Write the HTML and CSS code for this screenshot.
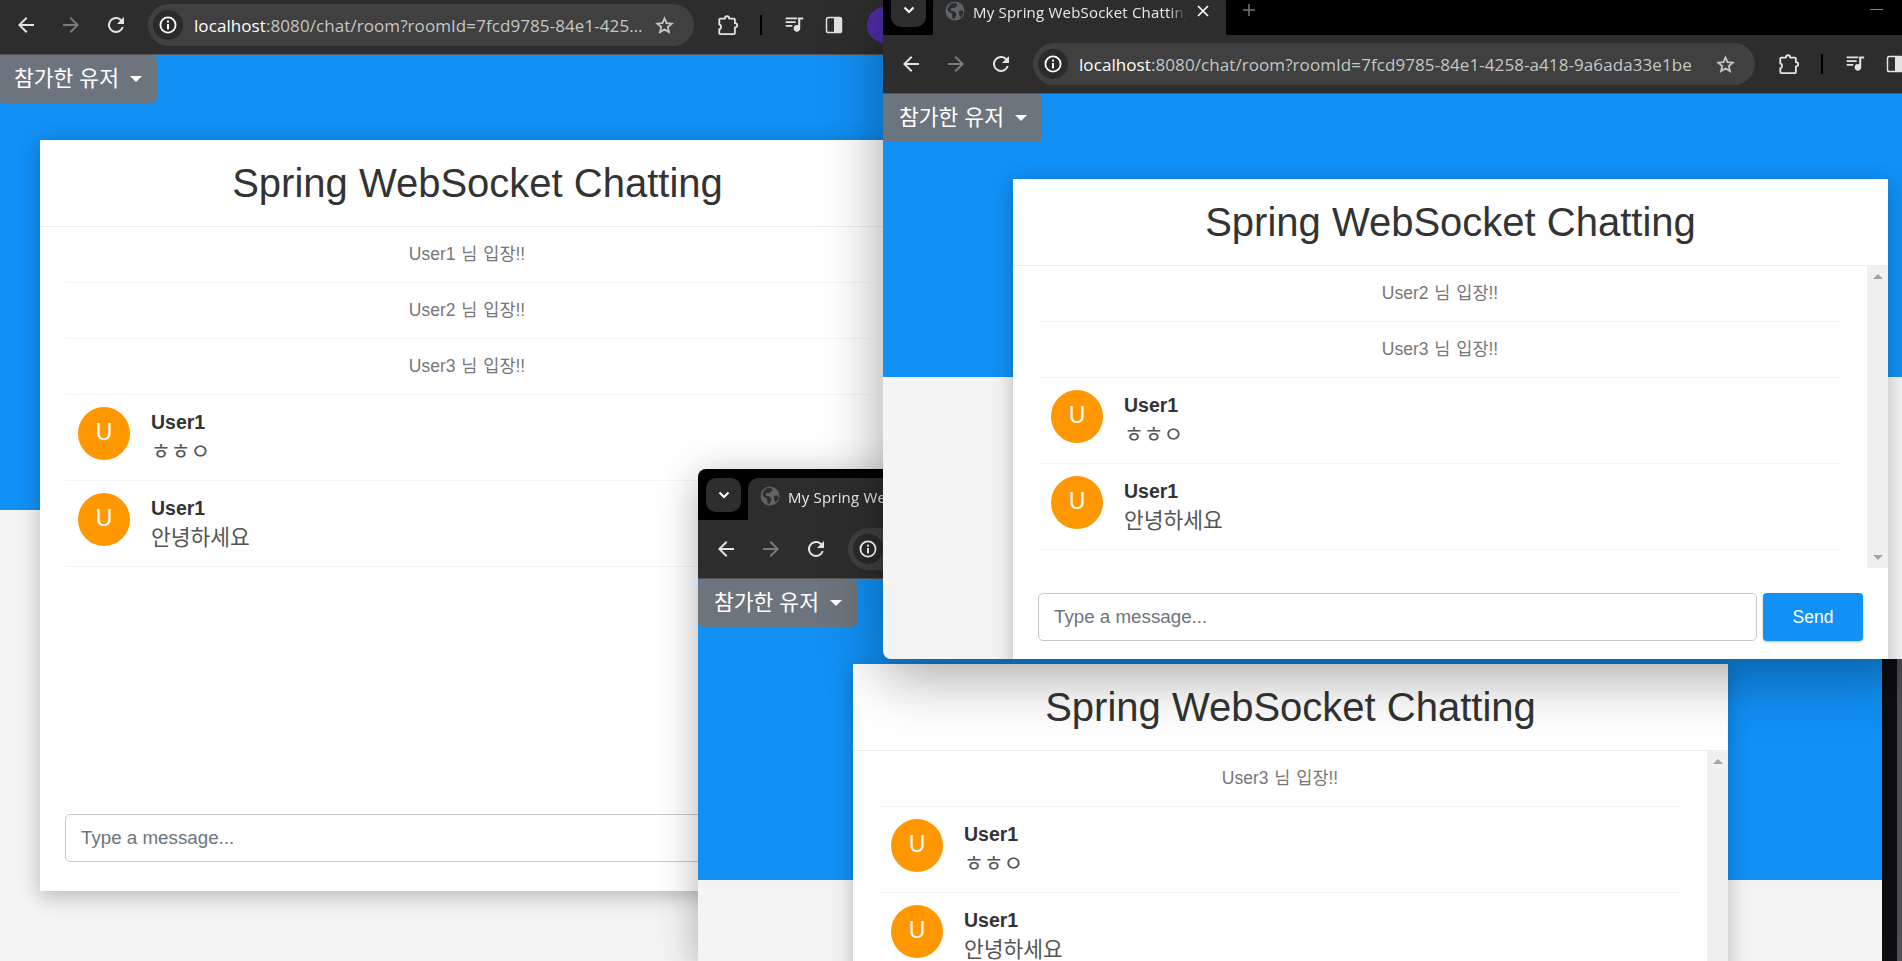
FILE: index.html
```html
<!DOCTYPE html>
<html lang="ko">
<head>
  <meta charset="UTF-8" />
  <meta name="viewport" content="width=device-width, initial-scale=1" />
  <title>Spring WebSocket Chatting</title>
  <link rel="stylesheet" href="styles.css">
</head>
<body>
  <svg class="sprite" aria-hidden="true">
    <symbol id="i-back" viewBox="0 0 24 24"><path fill="currentColor" d="M20 11H7.8l5.6-5.6L12 4l-8 8 8 8 1.4-1.4L7.8 13H20z"/></symbol>
    <symbol id="i-forward" viewBox="0 0 24 24"><path fill="currentColor" d="M4 11h12.2l-5.6-5.6L12 4l8 8-8 8-1.4-1.4 5.6-5.6H4z"/></symbol>
    <symbol id="i-reload" viewBox="0 0 24 24"><path fill="currentColor" d="M17.65 6.35A8 8 0 1 0 19.73 14h-2.08A6 6 0 1 1 12 6c1.66 0 3.14.69 4.22 1.78L13 11h7V4z"/></symbol>
    <symbol id="i-info" viewBox="0 0 18 18"><circle cx="9" cy="9" r="7.6" fill="none" stroke="currentColor" stroke-width="1.8"/><rect x="8" y="8" width="2" height="5.4" fill="currentColor"/><rect x="8" y="4.6" width="2" height="2" fill="currentColor"/></symbol>
    <symbol id="i-star" viewBox="0 0 20 20"><path fill="none" stroke="currentColor" stroke-width="1.9" d="M10 2.6l2.2 5 5.4.5-4.1 3.6 1.2 5.3L10 14.200l-4.700 2.800 1.200-5.300L2.400 8.100l5.400-.5z"/></symbol>
    <symbol id="i-puzzle" viewBox="0 0 24 24"><path fill="none" stroke="currentColor" stroke-width="2" stroke-linejoin="round" d="M3.500 5h5.200c0-3.400 4.600-3.400 4.600 0h5.200a1 1 0 0 1 1 1v4c3.400 0 3.400 4.600 0 4.600V21a1 1 0 0 1-1 1H3.500a1 1 0 0 1-1-1v-4.500c2.500 0 2.500-5 0-5V6a1 1 0 0 1 1-1z"/></symbol>
    <symbol id="i-media" viewBox="0 0 24 24"><path fill="currentColor" d="M2 3h14v2H2zM2 7.500h12v2H2zM2 12h8v2H2zM17 3h6v2.500h-3.500V16a4 4 0 1 1-2.500-3.700z"/></symbol>
    <symbol id="i-side" viewBox="0 0 24 24"><rect x="2" y="2" width="20" height="20" rx="2.500" fill="none" stroke="currentColor" stroke-width="2"/><rect x="12" y="2" width="10" height="20" rx="1.500" fill="currentColor"/></symbol>
    <symbol id="i-globe" viewBox="0 0 20 20"><circle cx="10" cy="10" r="9.500" fill="#5f6368"/><path fill="#2d2d2d" d="M6 2.500l5-.8 1.500 2.500-2.500 2.600-3.500.2-1 2.500 4 1 2 2.500-2 5-2-.7-.5-4.500-4-2.800L2.500 7zM14 10l3.800-.5.800 3-3 4-1.500-3z"/></symbol>
    <symbol id="i-chevron" viewBox="0 0 14 14"><path fill="none" stroke="currentColor" stroke-width="2" d="M2.500 4.500L7 9l4.500-4.500"/></symbol>
    <symbol id="i-close" viewBox="0 0 14 14"><path fill="none" stroke="currentColor" stroke-width="1.700" d="M2 2l10 10M12 2L2 12"/></symbol>
    <symbol id="i-plus" viewBox="0 0 14 14"><path fill="none" stroke="currentColor" stroke-width="1.500" d="M7 1v12M1 7h12"/></symbol>
  </svg>

  <!-- back window: User1 -->
  <div class="window win-back">
    <div class="toolbar">
      <span class="nav-btn"><svg class="icon-24"><use href="#i-back"/></svg></span>
      <span class="nav-btn dim"><svg class="icon-24"><use href="#i-forward"/></svg></span>
      <span class="nav-btn"><svg class="icon-24"><use href="#i-reload"/></svg></span>
      <div class="omnibox">
        <span class="site-info"><svg class="icon-18"><use href="#i-info"/></svg></span>
        <span class="url"><b>localhost</b>:8080/chat/room?roomId=7fcd9785-84e1-4258-a418-9a6ada33e1be</span>
        <svg class="star"><use href="#i-star"/></svg>
      </div>
      <span class="tool-btn"><svg class="icon-22"><use href="#i-puzzle"/></svg></span>
      <span class="tool-sep"></span>
      <span class="tool-btn media"><svg class="icon-20"><use href="#i-media"/></svg></span>
      <span class="tool-btn"><svg class="icon-18"><use href="#i-side"/></svg></span>
      <span class="profile"></span>
    </div>
    <div class="page">
      <button class="user-dropdown" type="button">참가한 유저 <span class="caret"></span></button>
      <div class="chat-card">
        <div class="chat-header"><h1>Spring WebSocket Chatting</h1></div>
        <div class="chat-body">
          <ul class="msg-list">
            <li class="msg-row sys">User1 님 입장!!</li>
            <li class="msg-row sys">User2 님 입장!!</li>
            <li class="msg-row sys">User3 님 입장!!</li>
            <li class="msg-row user">
              <span class="avatar">U</span>
              <div class="msg-text"><strong>User1</strong><p>ㅎㅎㅇ</p></div>
            </li>
            <li class="msg-row user">
              <span class="avatar">U</span>
              <div class="msg-text"><strong>User1</strong><p>안녕하세요</p></div>
            </li>
          </ul>
        </div>
        <form class="chat-form">
          <input type="text" placeholder="Type a message..." />
          <button type="button">Send</button>
        </form>
      </div>
    </div>
  </div>

  <!-- lower window: User3 -->
  <div class="window win-low">
    <div class="tabbar">
      <span class="tab-search"><svg class="icon-14"><use href="#i-chevron"/></svg></span>
      <div class="tab">
        <svg class="icon-20 globe"><use href="#i-globe"/></svg>
        <span class="tab-title">My Spring WebSocket Chatting</span>
        <svg class="icon-14 tab-close"><use href="#i-close"/></svg>
      </div>
      <svg class="icon-14 new-tab"><use href="#i-plus"/></svg>
    </div>
    <div class="toolbar">
      <span class="nav-btn"><svg class="icon-24"><use href="#i-back"/></svg></span>
      <span class="nav-btn dim"><svg class="icon-24"><use href="#i-forward"/></svg></span>
      <span class="nav-btn"><svg class="icon-24"><use href="#i-reload"/></svg></span>
      <div class="omnibox">
        <span class="site-info"><svg class="icon-18"><use href="#i-info"/></svg></span>
        <span class="url"><b>localhost</b>:8080/chat/room?roomId=7fcd9785-84e1-4258-a418-9a6ada33e1be</span>
        <svg class="star"><use href="#i-star"/></svg>
      </div>
    </div>
    <div class="page">
      <button class="user-dropdown" type="button">참가한 유저 <span class="caret"></span></button>
      <div class="chat-card">
        <div class="chat-header"><h1>Spring WebSocket Chatting</h1></div>
        <div class="chat-body">
          <ul class="msg-list">
            <li class="msg-row sys">User3 님 입장!!</li>
            <li class="msg-row user">
              <span class="avatar">U</span>
              <div class="msg-text"><strong>User1</strong><p>ㅎㅎㅇ</p></div>
            </li>
            <li class="msg-row user">
              <span class="avatar">U</span>
              <div class="msg-text"><strong>User1</strong><p>안녕하세요</p></div>
            </li>
          </ul>
          <div class="scrollbar"><span class="arrow-up"></span><span class="arrow-down"></span></div>
        </div>
      </div>
    </div>
  </div>

  <!-- front window: User2 -->
  <div class="window win-front">
    <div class="tabbar">
      <span class="tab-search"><svg class="icon-14"><use href="#i-chevron"/></svg></span>
      <div class="tab">
        <svg class="icon-20 globe"><use href="#i-globe"/></svg>
        <span class="tab-title">My Spring WebSocket Chatting</span>
        <svg class="icon-14 tab-close"><use href="#i-close"/></svg>
      </div>
      <svg class="icon-14 new-tab"><use href="#i-plus"/></svg>
      <span class="win-min"></span>
    </div>
    <div class="toolbar">
      <span class="nav-btn"><svg class="icon-24"><use href="#i-back"/></svg></span>
      <span class="nav-btn dim"><svg class="icon-24"><use href="#i-forward"/></svg></span>
      <span class="nav-btn"><svg class="icon-24"><use href="#i-reload"/></svg></span>
      <div class="omnibox">
        <span class="site-info"><svg class="icon-18"><use href="#i-info"/></svg></span>
        <span class="url"><b>localhost</b>:8080/chat/room?roomId=7fcd9785-84e1-4258-a418-9a6ada33e1be</span>
        <svg class="star"><use href="#i-star"/></svg>
      </div>
      <span class="tool-btn"><svg class="icon-22"><use href="#i-puzzle"/></svg></span>
      <span class="tool-sep"></span>
      <span class="tool-btn media"><svg class="icon-20"><use href="#i-media"/></svg></span>
      <span class="tool-btn"><svg class="icon-18"><use href="#i-side"/></svg></span>
    </div>
    <div class="page">
      <button class="user-dropdown" type="button">참가한 유저 <span class="caret"></span></button>
      <div class="chat-card">
        <div class="chat-header"><h1>Spring WebSocket Chatting</h1></div>
        <div class="chat-body">
          <ul class="msg-list">
            <li class="msg-row sys">User2 님 입장!!</li>
            <li class="msg-row sys">User3 님 입장!!</li>
            <li class="msg-row user">
              <span class="avatar">U</span>
              <div class="msg-text"><strong>User1</strong><p>ㅎㅎㅇ</p></div>
            </li>
            <li class="msg-row user">
              <span class="avatar">U</span>
              <div class="msg-text"><strong>User1</strong><p>안녕하세요</p></div>
            </li>
          </ul>
          <div class="scrollbar"><span class="arrow-up"></span><span class="arrow-down"></span></div>
        </div>
        <form class="chat-form">
          <input type="text" placeholder="Type a message..." />
          <button type="button">Send</button>
        </form>
      </div>
    </div>
  </div>
</body>
</html>
```

FILE: styles.css
```css
html, body {
  height: 100%;
}
body {
  margin: 0;
  overflow: hidden;
  position: relative;
  font-family: "Liberation Sans", "Noto Sans CJK KR", sans-serif;
  background: linear-gradient(90deg, #0d0f13 1897px, #555 1897px);
}
.sprite {
  display: none;
}

/* windows on the desktop */
.window {
  position: absolute;
  overflow: hidden;
  display: flex;
  flex-direction: column;
}
.win-back {
  left: -2px;
  top: -4px;
  width: 885px;
  height: 965px;
}
.win-low {
  left: 698px;
  top: 469px;
  width: 1184px;
  height: 492px;
  border-radius: 8px 0 0 0;
  box-shadow: 0 8px 40px rgba(0,0,0,0.3);
}
.win-front {
  left: 883px;
  top: -16px;
  width: 1030px;
  height: 675px;
  border-radius: 8px;
  box-shadow: 0 16px 60px rgba(0,0,0,0.36);
}

/* browser chrome */
.tabbar {
  flex: none;
  display: flex;
  align-items: flex-start;
  height: 51px;
  padding-top: 9px;
  box-sizing: border-box;
  background: #000;
  color: #fff;
}
.tab-search {
  display: flex;
  align-items: center;
  justify-content: center;
  width: 35px;
  height: 34px;
  margin-left: 8px;
  border-radius: 10px;
  background: #2d2d2d;
}
.tab {
  display: flex;
  align-items: flex-start;
  width: 293px;
  height: 42px;
  margin-left: 7px;
  padding: 8px 16px 0 12px;
  box-sizing: border-box;
  border-radius: 10px 10px 0 0;
  background: #2d2d2d;
}
.globe {
  flex: none;
}
.tab-title {
  flex: 1;
  min-width: 0;
  margin: 1px 10px 0 8px;
  overflow: hidden;
  white-space: nowrap;
  font: 15px "Open Sans", sans-serif;
  letter-spacing: 0.2px;
  color: #e8eaed;
  -webkit-mask-image: linear-gradient(90deg, #000 92%, transparent);
  mask-image: linear-gradient(90deg, #000 92%, transparent);
}
.tab-close {
  flex: none;
  margin-top: 3px;
}
.new-tab {
  margin: 10px 0 0 16px;
  color: #777;
}
.win-min {
  width: 13px;
  height: 1px;
  margin: 16px 0 0 614px;
  background: #888;
}
.toolbar {
  flex: none;
  display: flex;
  align-items: center;
  height: 59px;
  padding-left: 5px;
  box-sizing: border-box;
  border-bottom: 1px solid #555;
  background: #2d2d2d;
  color: #e3e3e3;
}
.nav-btn {
  flex: none;
  display: flex;
  align-items: center;
  justify-content: center;
  width: 45px;
}
.nav-btn.dim {
  color: #7a7a7a;
}
.omnibox {
  display: flex;
  align-items: center;
  flex: none;
  height: 42px;
  margin-left: 10px;
  padding-left: 5px;
  box-sizing: border-box;
  border-radius: 21px;
  background: #404040;
}
.win-back .omnibox {
  width: 546px;
}
.win-low .omnibox,
.win-front .omnibox {
  width: 722px;
}
.site-info {
  flex: none;
  display: flex;
  align-items: center;
  justify-content: center;
  width: 30px;
  height: 30px;
  border-radius: 50%;
  background: #2b2b2b;
  color: #fff;
}
.url {
  flex: 1;
  min-width: 0;
  margin-left: 11px;
  overflow: hidden;
  white-space: nowrap;
  text-overflow: ellipsis;
  font: 17px "Open Sans", sans-serif;
  letter-spacing: 0.08px;
  color: #c4c7c5;
}
.url b {
  font-weight: 400;
  color: #fff;
}
.star {
  flex: none;
  width: 19px;
  height: 19px;
  margin: 0 20px 0 6px;
  color: #c4c7c5;
}
.tool-btn {
  flex: none;
  display: flex;
  align-items: center;
  justify-content: center;
  width: 40px;
  color: #e3e3e3;
}
.omnibox + .tool-btn {
  margin-left: 14px;
}
.tool-sep {
  flex: none;
  width: 2px;
  height: 20px;
  margin-left: 12px;
  background: #000;
}
.tool-btn.media {
  margin-left: 12px;
}
.profile {
  flex: none;
  width: 36px;
  height: 36px;
  margin-left: 13px;
  border-radius: 50%;
  background: #512da8;
}
.icon-24 { width: 24px; height: 24px; }
.icon-22 { width: 22px; height: 22px; }
.icon-20 { width: 20px; height: 20px; }
.icon-18 { width: 18px; height: 18px; }
.icon-14 { width: 14px; height: 14px; }

/* chat page */
.page {
  flex: 1;
  min-height: 0;
  background: #f4f4f4;
}
.win-back .page {
  background: linear-gradient(#1190f5 455px, #f4f4f4 455px);
}
.win-low .page {
  background: linear-gradient(#1190f5 301px, #f4f4f4 301px);
}
.win-front .page {
  background: linear-gradient(#1190f5 283px, #f4f4f4 283px);
}
.user-dropdown {
  display: block;
  width: 159px;
  height: 48px;
  padding: 0 0 5px 16px;
  border: none;
  border-radius: 5px;
  background: #6c757d;
  color: #fff;
  text-align: left;
  font: 21.500px "Noto Sans CJK KR", sans-serif;
}
.caret {
  display: inline-block;
  margin-left: 5px;
  vertical-align: 4px;
  border-top: 6px solid #fff;
  border-left: 6px solid transparent;
  border-right: 6px solid transparent;
}
.chat-card {
  width: 875px;
  margin-top: 37px;
  background: #fff;
  box-shadow: 0 5px 20px rgba(0,0,0,0.25);
}
.win-back .chat-card { margin-left: 42px; }
.win-low .chat-card { margin-left: 155px; }
.win-front .chat-card { margin-left: 130px; }
.chat-header {
  height: 87px;
  box-sizing: border-box;
  border-bottom: 1px solid #eee;
  display: flex;
  align-items: center;
  justify-content: center;
}
.chat-header h1 {
  margin: 0;
  font-size: 40px;
  font-weight: 400;
  color: #333;
}
.chat-body {
  display: flex;
  height: 302px;
}
.win-back .chat-body {
  height: 562px;
}
.msg-list {
  flex: 1;
  min-width: 0;
  margin: 0;
  padding: 0 25px;
  list-style: none;
  overflow: hidden;
}
.win-back .msg-list {
  margin-right: 21px;
}
.msg-row {
  box-sizing: border-box;
  border-bottom: 1px solid #f4f4f4;
}
.msg-row.sys {
  height: 56px;
  line-height: 54px;
  text-align: center;
  font-size: 17.5px;
  word-spacing: 1px;
  color: #777;
}
.msg-row.user {
  display: flex;
  height: 86px;
  padding: 12px 0 0 13px;
}
.avatar {
  flex: none;
  width: 52px;
  height: 53px;
  border-radius: 50%;
  background: #ff9800;
  color: #fff;
  text-align: center;
  font-size: 23px;
  line-height: 50px;
}
.msg-text {
  margin-left: 21px;
}
.msg-text strong {
  display: block;
  height: 29px;
  line-height: 31px;
  font-size: 19.500px;
  color: #333;
}
.msg-text p {
  margin: 0;
  height: 30px;
  line-height: 32px;
  font-size: 21.500px;
  color: #555;
}
.scrollbar {
  flex: none;
  display: flex;
  flex-direction: column;
  align-items: center;
  justify-content: space-between;
  width: 21px;
  padding: 8px 0;
  box-sizing: border-box;
  background: #f0f0f0;
}
.arrow-up {
  border-bottom: 5px solid #a3a3a3;
  border-left: 5px solid transparent;
  border-right: 5px solid transparent;
}
.arrow-down {
  border-top: 5px solid #a3a3a3;
  border-left: 5px solid transparent;
  border-right: 5px solid transparent;
}
.chat-form {
  display: flex;
  gap: 6px;
  padding: 25px 25px 29px;
}
.chat-form input {
  flex: 1;
  min-width: 0;
  height: 48px;
  padding: 0 15px;
  box-sizing: border-box;
  border: 1px solid #c8c8c8;
  border-radius: 5px;
  font: 18.750px "Liberation Sans", sans-serif;
}
.chat-form input::placeholder {
  color: #6c757d;
}
.chat-form button {
  flex: none;
  width: 100px;
  height: 48px;
  border: none;
  border-radius: 4px;
  background: #1190f5;
  color: #fff;
  font: 17.5px "Liberation Sans", sans-serif;
  box-shadow: 0 1px 3px rgba(0,0,0,0.25);
}
```
